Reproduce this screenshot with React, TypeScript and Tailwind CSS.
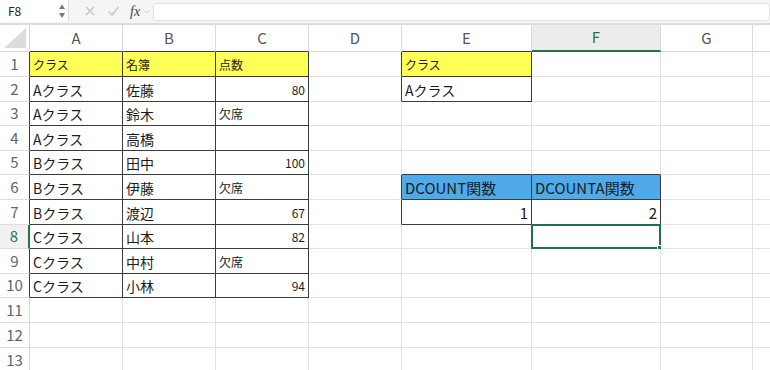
import React from "react";

type Cell = {
  text?: string;
  right?: boolean;
  size?: string;
  bg?: string;
};

// column widths, A..G plus the cut-off column at the right edge
const COLS = [
  { key: "A", w: "w-[93px]" },
  { key: "B", w: "w-[93px]" },
  { key: "C", w: "w-[93px]" },
  { key: "D", w: "w-[93px]" },
  { key: "E", w: "w-[130px]" },
  { key: "F", w: "w-[129px]" },
  { key: "G", w: "w-[92px]" },
  { key: "H", w: "w-[40px]" },
];

const ROW_H = [
  "h-[25px]", "h-[25px]", "h-[24px]", "h-[25px]", "h-[24px]", "h-[25px]", "h-[25px]",
  "h-[24px]", "h-[25px]", "h-[24px]", "h-[25px]", "h-[25px]", "h-[25px]",
];

const Y = "bg-[#ffff55]";
const BLUE = "bg-[#4eaae8]";
const head = "text-[12px]";
const big = "text-[14px]";
const num = "text-[12px]";

const data: Record<string, Cell> = {
  "1,0": { text: "クラス", size: head, bg: Y },
  "1,1": { text: "名簿", size: head, bg: Y },
  "1,2": { text: "点数", size: head, bg: Y },
  "1,4": { text: "クラス", size: head, bg: Y },
  "2,0": { text: "Aクラス" },
  "2,1": { text: "佐藤" },
  "2,2": { text: "80", right: true, size: num },
  "2,4": { text: "Aクラス" },
  "3,0": { text: "Aクラス" },
  "3,1": { text: "鈴木" },
  "3,2": { text: "欠席", size: head },
  "4,0": { text: "Aクラス" },
  "4,1": { text: "高橋" },
  "5,0": { text: "Bクラス" },
  "5,1": { text: "田中" },
  "5,2": { text: "100", right: true, size: num },
  "6,0": { text: "Bクラス" },
  "6,1": { text: "伊藤" },
  "6,2": { text: "欠席", size: head },
  "6,4": { text: "DCOUNT関数", size: "text-[15px]", bg: BLUE },
  "6,5": { text: "DCOUNTA関数", size: "text-[15px]", bg: BLUE },
  "7,0": { text: "Bクラス" },
  "7,1": { text: "渡辺" },
  "7,2": { text: "67", right: true, size: num },
  "7,4": { text: "1", right: true, size: "text-[15px]" },
  "7,5": { text: "2", right: true, size: "text-[15px]" },
  "8,0": { text: "Cクラス" },
  "8,1": { text: "山本" },
  "8,2": { text: "82", right: true, size: num },
  "9,0": { text: "Cクラス" },
  "9,1": { text: "中村" },
  "9,2": { text: "欠席", size: head },
  "10,0": { text: "Cクラス" },
  "10,1": { text: "小林" },
  "10,2": { text: "94", right: true, size: num },
};

const boxed = (r: number, c: number) => {
  if (r >= 1 && r <= 10 && c >= 0 && c <= 2) return true;
  if ((r === 1 || r === 2) && c === 4) return true;
  if ((r === 6 || r === 7) && (c === 4 || c === 5)) return true;
  return false;
};

const FormulaBar = () => (
  <div className="h-[25px] flex bg-[#f5f5f5] border-b-2 border-[#dcdcdc]">
    <div className="w-[69px] h-[22px] bg-white border-r border-[#dedede] flex items-center justify-between pl-[8px] pr-[3px]">
      <span className="text-[12px] text-[#222]">F8</span>
      <div className="flex flex-col items-center leading-none text-[#777] text-[6px] gap-[2px]">
        <span>▲</span>
        <span>▼</span>
      </div>
    </div>
    <div className="flex items-center h-[22px]">
      <svg width="12" height="12" viewBox="0 0 12 12" className="ml-[15px]">
        <path d="M2 2 L10 10 M10 2 L2 10" stroke="#c4c4c4" strokeWidth="1.4" />
      </svg>
      <svg width="13" height="12" viewBox="0 0 13 12" className="ml-[11px]">
        <path d="M1.5 6.5 L5 10 L11.5 2" stroke="#c4c4c4" strokeWidth="1.4" fill="none" />
      </svg>
      <span className="ml-[10px] text-[14px] italic text-[#444]" style={{ fontFamily: '"Liberation Serif", serif' }}>
        fx
      </span>
      <svg width="7" height="6" viewBox="0 0 7 6" className="ml-[3px] mt-[2px]">
        <path d="M1 1.5 L3.5 4 L6 1.5" stroke="#c8c8c8" strokeWidth="1" fill="none" />
      </svg>
    </div>
    <div className="flex-1 ml-[3px] mt-[3px] h-[18px] bg-white border border-[#e2e2e2] rounded-[3px]" />
  </div>
);

const HeaderRow = () => (
  <div className="flex h-[27px]">
    <div className="w-[30px] shrink-0 border-r border-b border-[#d6d6d6] relative">
      <svg width="22" height="20" viewBox="0 0 22 20" className="absolute right-[3px] bottom-[3px]">
        <polygon points="22,0 22,20 0,20" fill="#dcdcdc" />
      </svg>
    </div>
    {COLS.map((col, i) => {
      const sel = col.key === "F";
      return (
        <div
          key={col.key}
          className={`${col.w} shrink-0 flex items-center justify-center text-[15px] border-r border-[#dadada] ${
            sel
              ? "bg-[#ececec] text-[#217346] border-b-2 border-b-[#217346]"
              : boxed(1, i)
              ? "bg-white text-[#555] border-b border-b-[#3c3c3c]"
              : "bg-white text-[#555] border-b border-b-[#d6d6d6]"
          }`}
        >
          {/* the last column is cut off by the window, its letter is out of view */}
          {col.key === "H" ? "" : col.key}
        </div>
      );
    })}
  </div>
);

const GridRow = ({ r }: { r: number }) => {
  const selRow = r === 8;
  return (
    <div className={`flex ${ROW_H[r - 1]}`}>
      <div
        className={`w-[30px] shrink-0 flex items-center justify-center text-[15px] border-b border-b-[#dedede] ${
          selRow
            ? "text-[#217346] border-r-2 border-r-[#217346] bg-[#f1f1f1]"
            : boxed(r, 0)
            ? "text-[#666] border-r border-r-[#3c3c3c]"
            : "text-[#666] border-r border-r-[#d6d6d6]"
        }`}
      >
        {r}
      </div>
      {COLS.map((col, c) => {
        const cell = data[`${r},${c}`] ?? {};
        const rd = boxed(r, c) || boxed(r, c + 1);
        const bd = boxed(r, c) || boxed(r + 1, c);
        const selected = r === 8 && c === 5;
        return (
          <div
            key={col.key}
            className={`${col.w} shrink-0 relative flex items-center pt-[1px] px-[3px] border-r border-b text-[#1c1c1c] ${
              cell.bg ?? "bg-white"
            } ${cell.size ?? big} ${cell.right ? "justify-end" : "justify-start"} ${
              rd ? "border-r-[#3c3c3c]" : "border-r-[#e1e1e1]"
            } ${bd ? "border-b-[#3c3c3c]" : "border-b-[#e1e1e1]"}`}
          >
            <span className="whitespace-nowrap leading-none">{cell.text}</span>
            {selected && (
              <div className="absolute -left-[1px] -top-[1px] -right-[1px] -bottom-[1px] border-2 border-[#217346]">
                <div className="absolute -right-[3px] -bottom-[3px] w-[5px] h-[5px] bg-[#217346] border border-white" />
              </div>
            )}
          </div>
        );
      })}
    </div>
  );
};

export default function App() {
  return (
    <div
      className="w-[770px] h-[370px] overflow-hidden bg-white"
      style={{ fontFamily: '"Noto Sans CJK JP", "Liberation Sans", sans-serif' }}
    >
      <FormulaBar />
      <HeaderRow />
      {Array.from({ length: 13 }, (_, i) => (
        <GridRow key={i} r={i + 1} />
      ))}
    </div>
  );
}
